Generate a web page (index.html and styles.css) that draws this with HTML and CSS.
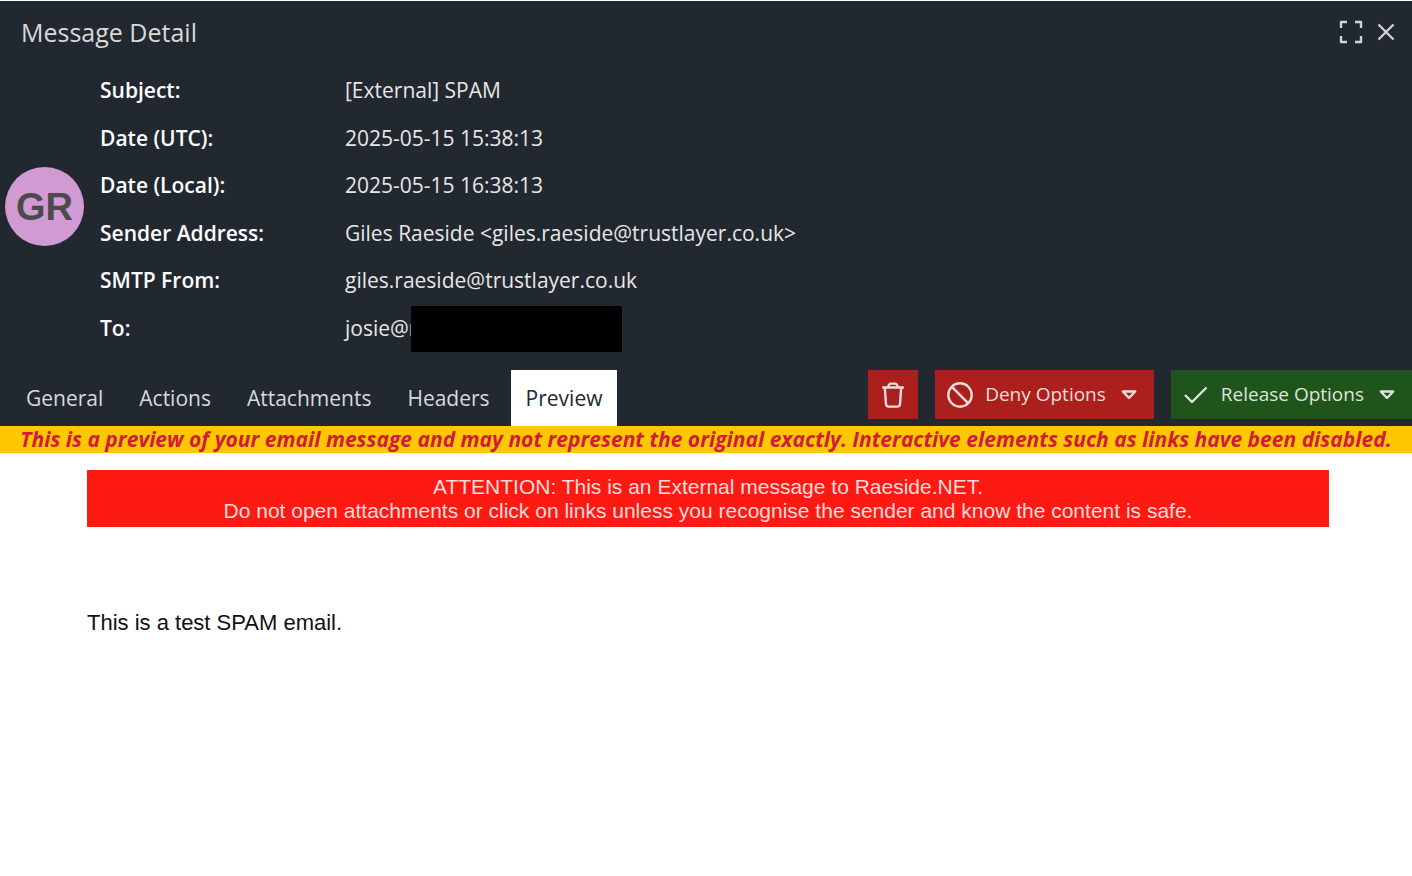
FILE: index.html
```html
<!DOCTYPE html>
<html lang="en">
<head>
  <meta charset="utf-8">
  <title>Message Detail</title>
  <link rel="stylesheet" href="styles.css">
</head>
<body>

  <div id="detail">
    <header class="title-bar">
      <h1>Message Detail</h1>
      <div class="window-controls">
        <button class="icon-btn" aria-label="Fullscreen">
          <svg width="24" height="24" viewBox="0 0 24 24"><path d="M2 8V2h6M16 2h6v6M22 16v6h-6M8 22H2v-6"/></svg>
        </button>
        <button class="icon-btn" aria-label="Close">
          <svg width="18" height="18" viewBox="0 0 18 18"><path d="M1.500 1.500l15 15M16.500 1.500l-15 15"/></svg>
        </button>
      </div>
    </header>

    <section class="summary">
      <div class="avatar">GR</div>
      <table class="fields">
        <tr><th scope="row">Subject:</th><td>[External] SPAM</td></tr>
        <tr><th scope="row">Date (UTC):</th><td>2025-05-15 15:38:13</td></tr>
        <tr><th scope="row">Date (Local):</th><td>2025-05-15 16:38:13</td></tr>
        <tr><th scope="row">Sender Address:</th><td>Giles Raeside &lt;giles.raeside@trustlayer.co.uk&gt;</td></tr>
        <tr><th scope="row">SMTP From:</th><td>giles.raeside@trustlayer.co.uk</td></tr>
        <tr><th scope="row">To:</th><td><div class="recipient">josie@r<span class="redacted"></span></div></td></tr>
      </table>
    </section>

    <div class="toolbar">
      <nav class="tabs">
        <button class="tab">General</button>
        <button class="tab">Actions</button>
        <button class="tab">Attachments</button>
        <button class="tab">Headers</button>
        <button class="tab active">Preview</button>
      </nav>
      <div class="actions">
        <button class="btn delete" aria-label="Delete">
          <svg width="24" height="28" viewBox="0 0 24 28"><path d="M1.200 6.500h21.600M7 6.200l.8-2q.6-1.600 2.200-1.600h4q1.600 0 2.200 1.600l.8 2M3.800 7l1.200 16q.2 2.600 2.600 2.600h8.800q2.400 0 2.600-2.600L20.200 7"/></svg>
        </button>
        <button class="btn deny">
          <svg width="26" height="26" viewBox="0 0 26 26"><circle cx="13" cy="13" r="11.700"/><path d="M4.700 4.700l16.600 16.600"/></svg>
          Deny Options
          <svg class="caret" width="16" height="12" viewBox="0 0 16 12"><path d="M1.800 2.500h12.400L8 9z"/></svg>
        </button>
        <button class="btn release">
          <svg width="26" height="26" viewBox="0 0 26 26"><path d="M2 13l7 7L23.500 5.500"/></svg>
          Release Options
          <svg class="caret" width="16" height="12" viewBox="0 0 16 12"><path d="M1.800 2.500h12.400L8 9z"/></svg>
        </button>
      </div>
    </div>
  </div>

  <div class="notice">This is a preview of your email message and may not represent the original exactly. Interactive elements such as links have been disabled.</div>

  <main class="message">
    <div class="external">
      ATTENTION: This is an External message to Raeside.NET.<br>
      Do not open attachments or click on links unless you recognise the sender and know the content is safe.
    </div>
    <p>This is a test SPAM email.</p>
  </main>

</body>
</html>
```
FILE: styles.css
```css
* {
  box-sizing: border-box;
}

body {
  margin: 0;
  background: #fff;
  font-family: "Open Sans", sans-serif;
  font-size: 21px;
  line-height: 27px;
}

button {
  border: 0;
  padding: 0;
  background: none;
  color: inherit;
  font: inherit;
  cursor: pointer;
}

svg {
  display: block;
  fill: none;
  stroke: currentColor;
  stroke-width: 2.4;
  stroke-linejoin: round;
}

#detail {
  background: #22282f;
  color: #e6e6e6;
  border-top: 1px solid #fff;
}

.title-bar {
  display: flex;
  justify-content: space-between;
  align-items: center;
  height: 66px;
  padding: 0 17px 4px 21px;
}

.title-bar h1 {
  margin: 0;
  font-size: 25px;
  font-weight: 400;
  color: #d8d9da;
}

.window-controls {
  display: flex;
  align-items: center;
  gap: 14px;
  color: #d0d2d3;
}

/* sender + header fields */
.summary {
  display: flex;
  align-items: center;
  gap: 16px;
  padding: 0 5px;
}

.avatar {
  width: 79px;
  height: 79px;
  margin-bottom: 6px;
  border-radius: 50%;
  background: #d19ad3;
  color: #4b4b4b;
  font: bold 38px/81px "Liberation Sans", Arial, sans-serif;
  text-align: center;
}

.fields {
  height: 285px;
  border-collapse: collapse;
}

.fields th,
.fields td {
  padding: 0;
  text-align: left;
  white-space: nowrap;
}

.fields th {
  width: 245px;
  font-weight: 600;
  color: #fff;
}

.recipient {
  position: relative;
}

.redacted {
  position: absolute;
  top: -9px;
  left: 66px;
  width: 211px;
  height: 46px;
  background: #000;
}

/* tabs and action buttons */
.toolbar {
  display: flex;
  justify-content: space-between;
  align-items: flex-start;
  padding: 18px 0 0 11px;
}

.tabs {
  display: flex;
  gap: 6px;
}

.tab {
  height: 56px;
  padding: 0 15px;
  color: #d8d9da;
}

.tab.active {
  background: #fff;
  color: #22282f;
}

.actions {
  display: flex;
  gap: 17px;
}

.btn {
  display: flex;
  align-items: center;
  gap: 12px;
  height: 49px;
  padding: 0 17px 0 12px;
  font-size: 19px;
  color: #f0dcdc;
}

.btn .caret {
  margin-left: 3px;
}

.delete {
  padding: 0 13px;
}

.delete,
.deny {
  background: #ab201d;
}

.release {
  background: #1f541b;
  color: #dce5dc;
}

.notice {
  background: #fdc800;
  color: #d21a3c;
  font-weight: 700;
  font-style: italic;
  text-align: center;
}

/* email body */
.message {
  padding: 17px 83px 17px 87px;
  font-family: "Liberation Sans", Arial, sans-serif;
}

.external {
  padding: 5px 5px 4px;
  background: #fd1a13;
  color: #ffdcdc;
  font-size: 21px;
  line-height: 24px;
  text-align: center;
}

.message p {
  margin: 82px 0 0;
  font-size: 22px;
  color: #111;
}
```
